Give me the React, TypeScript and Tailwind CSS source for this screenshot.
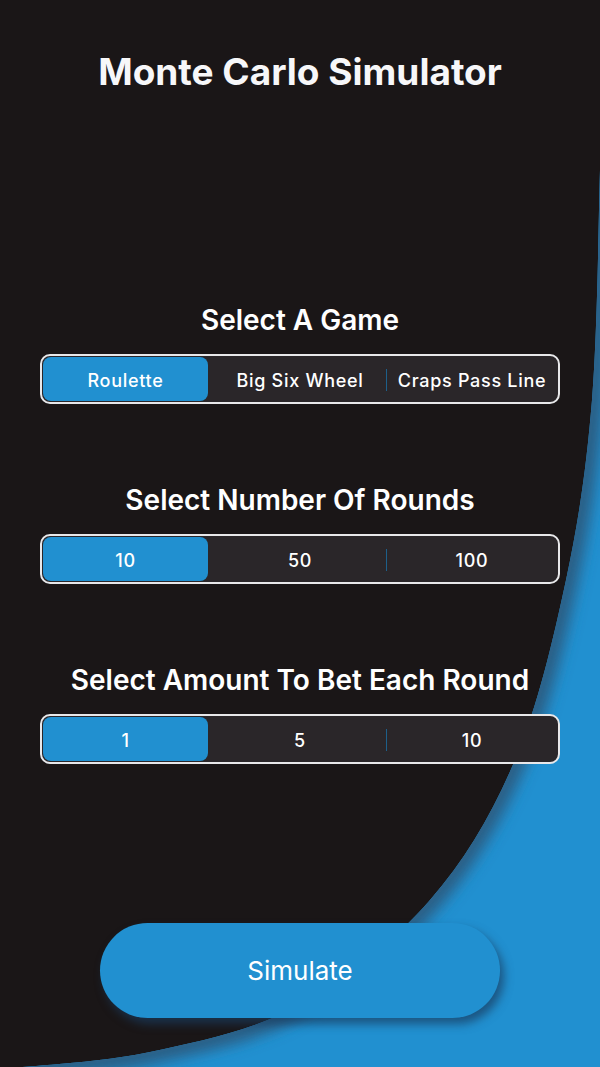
import { useState } from 'react';

// edge of the blue swoosh, traced from the design
const edge: [number, number][] = [
  [600, 170],
  [592, 400],
  [566, 580],
  [515, 760],
  [430, 900],
  [300, 1005],
  [150, 1052],
  [0, 1069],
];

// catmull-rom -> cubic bezier
const smoothPath = (pts: [number, number][]) => {
  let d = `M${pts[0][0]},${pts[0][1]}`;
  for (let i = 0; i < pts.length - 1; i++) {
    const p0 = pts[i - 1] || pts[i];
    const p1 = pts[i];
    const p2 = pts[i + 1];
    const p3 = pts[i + 2] || p2;
    const c1x = p1[0] + (p2[0] - p0[0]) / 6;
    const c1y = p1[1] + (p2[1] - p0[1]) / 6;
    const c2x = p2[0] - (p3[0] - p1[0]) / 6;
    const c2y = p2[1] - (p3[1] - p1[1]) / 6;
    d += ` C${c1x},${c1y} ${c2x},${c2y} ${p2[0]},${p2[1]}`;
  }
  return d;
};

const curve = smoothPath(edge);
const shape = `${curve} L0,1080 L600,1080 Z`;

const sections = [
  { title: 'Select A Game', options: ['Roulette', 'Big Six Wheel', 'Craps Pass Line'] },
  { title: 'Select Number Of Rounds', options: ['10', '50', '100'] },
  { title: 'Select Amount To Bet Each Round', options: ['1', '5', '10'] },
];

const Segmented = ({
  options,
  selected,
  onSelect,
}: {
  options: string[];
  selected: number;
  onSelect: (i: number) => void;
}) => (
  <div className="mt-[14px] grid h-[50px] w-[520px] grid-cols-3 rounded-[10px] border-2 border-[#e8e8ea] bg-[#2a2629]">
    {options.map((opt, i) => {
      const active = i === selected;
      // separator only between two unselected segments
      const showSep = i > 0 && i !== selected && i - 1 !== selected;
      return (
        <button
          key={opt}
          onClick={() => onSelect(i)}
          className="relative flex items-stretch"
        >
          {showSep && (
            <span className="absolute left-0 top-[13px] h-[22px] w-px bg-[#1d5f8a]" />
          )}
          <span
            className={`my-[1px] flex flex-1 items-center justify-center rounded-[8px] pt-[2px] text-[18px] font-medium tracking-[0.7px] text-white ${
              active ? 'ml-[1px] mr-[6px] bg-[#2190d0]' : ''
            }`}
          >
            {opt}
          </span>
        </button>
      );
    })}
  </div>
);

export default function App() {
  const [picks, setPicks] = useState([0, 0, 0]);

  return (
    <div
      className="relative h-[1067px] w-[600px] overflow-hidden bg-[#1a1617]"
      style={{ fontFamily: 'Inter, "Noto Sans", sans-serif' }}
    >
      {/* background swoosh */}
      <svg className="absolute inset-0 h-full w-full" viewBox="0 0 600 1067">
        <defs>
          <clipPath id="swoosh">
            <path d={shape} />
          </clipPath>
          <filter id="soft" x="-20%" y="-20%" width="140%" height="140%">
            <feGaussianBlur stdDeviation="7" />
          </filter>
        </defs>
        <path d={shape} fill="#2190d0" />
        <g clipPath="url(#swoosh)">
          <path d={curve} fill="none" stroke="#2b5f85" strokeWidth="24" filter="url(#soft)" />
        </g>
      </svg>

      <div className="relative flex flex-col items-center">
        <h1 className="mt-[48px] flex h-[48px] items-center text-[37px] font-bold text-[#f7f7f9]">
          Monte Carlo Simulator
        </h1>

        {sections.map((s, idx) => (
          <div key={s.title} className={`flex flex-col items-center ${idx === 0 ? 'mt-[204px]' : 'mt-[76px]'}`}>
            <h2 className="flex h-[40px] items-center text-[28px] font-semibold text-white">
              {s.title}
            </h2>
            <Segmented
              options={s.options}
              selected={picks[idx]}
              onSelect={(i) => setPicks(picks.map((p, j) => (j === idx ? i : p)))}
            />
          </div>
        ))}

        <button className="mt-[159px] flex h-[95px] w-[400px] items-center justify-center rounded-full bg-[#2190d0] text-[26px] font-normal text-white shadow-[4px_6px_10px_rgba(25,60,95,0.7)]">
          Simulate
        </button>
      </div>
    </div>
  );
}
